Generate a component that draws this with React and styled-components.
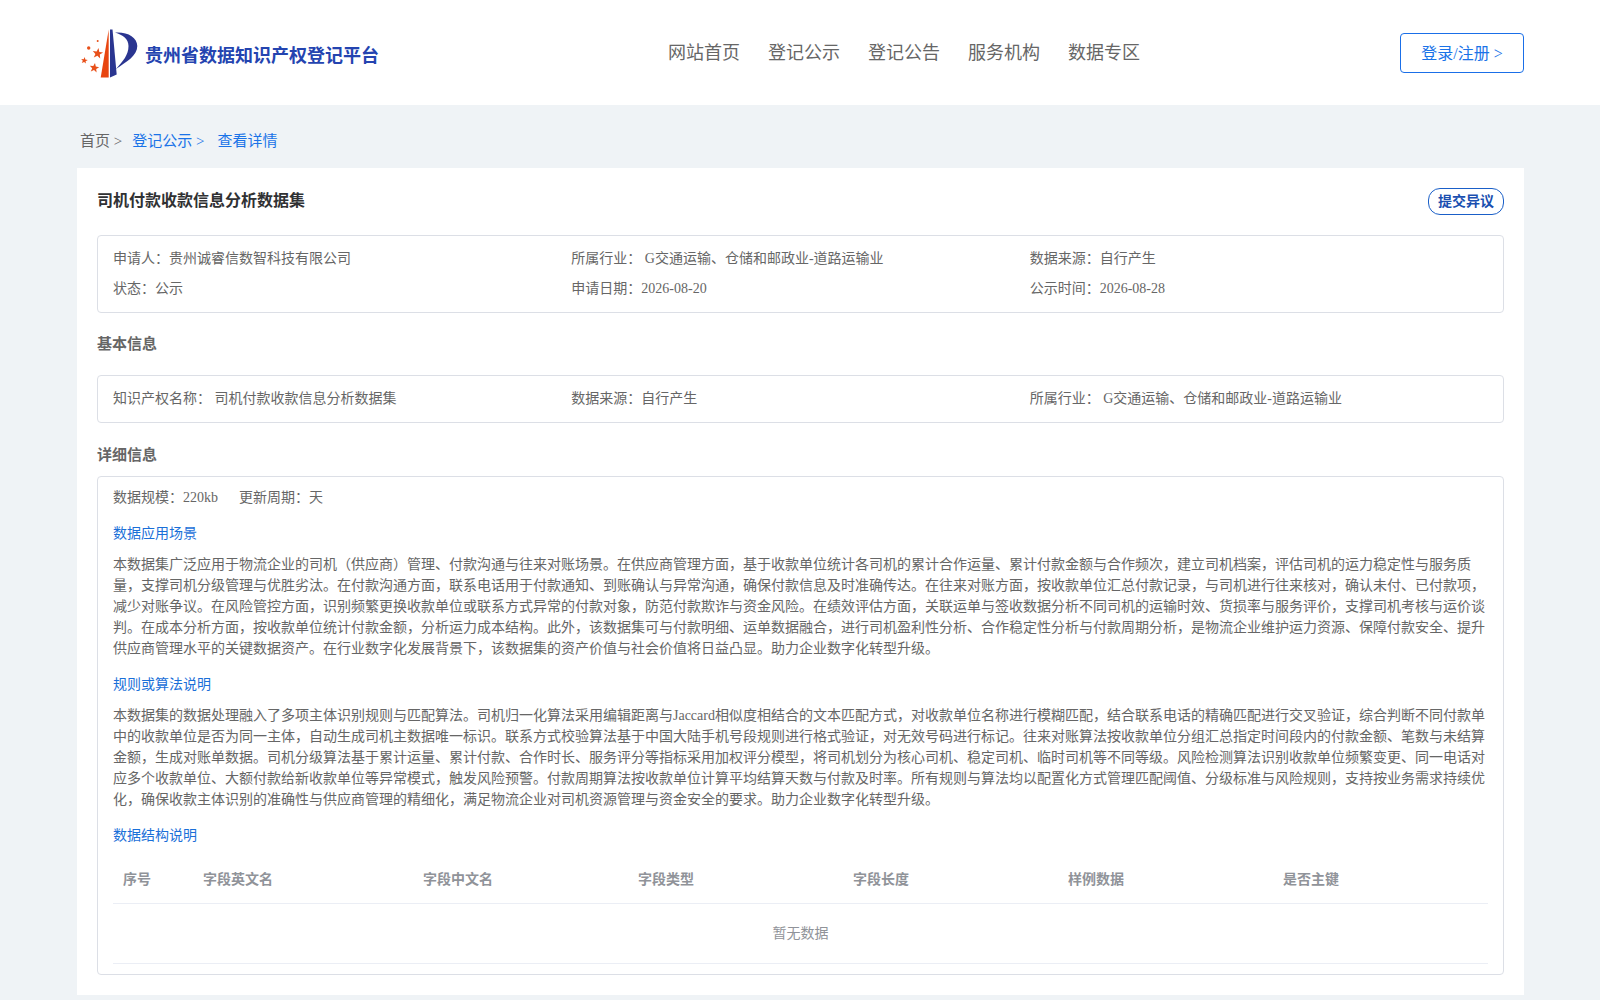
import React from "react";
import styled, { createGlobalStyle } from "styled-components";

const Global = createGlobalStyle`
  html, body { margin: 0; padding: 0; background: #eff3f6; }
  body { font-family: "Liberation Serif", "Noto Sans CJK SC", serif; color: #666; }
  * { box-sizing: border-box; }
`;
const Page = styled.div`height: 1000px; overflow: hidden; background: #eff3f6;`;
const Header = styled.header`
  height: 105px; background: #fff; display: grid;
  grid-template-columns: 588px auto 1fr; align-items: center; padding: 0 76px 0 80px;
`;
const Brand = styled.div`display: flex; align-items: center; gap: 7px;`;
const BrandName = styled.span`font-size: 18px; font-weight: 700; color: #2444b0; margin-top: 3px;`;
const Nav = styled.nav`display: flex; gap: 28px;`;
const NavItem = styled.a`font-size: 18px; line-height: 24px; color: #666;`;
const LoginWrap = styled.div`display: flex; justify-content: flex-end;`;
const Login = styled.button`
  width: 124px; height: 40px; border: 1px solid #1a6fe8; border-radius: 4px; background: #fff;
  color: #1a73e8; font: inherit; font-size: 16px; padding: 0 0 2px;
`;
const Crumbs = styled.div`
  height: 63px; padding: 6px 0 0 80px; display: flex; align-items: center; font-size: 15px;
`;
const CrumbPlain = styled.span`color: #666; margin-right: 10px;`;
const CrumbLink = styled.span`color: #1a73e8; margin-right: ${p => p.$gap || 0}px;`;
const Card = styled.main`
  margin: 0 76px 0 77px; background: #fff; padding: 20px 20px 10px; height: 827px;
`;
const TitleRow = styled.div`display: flex; justify-content: space-between; align-items: flex-start; height: 47px;`;
const Title = styled.h1`margin: 1px 0 0; font-size: 16px; line-height: 24px; font-weight: 700; color: #303133;`;
const Objection = styled.button`
  width: 76px; height: 27px; border: 1px solid #1a5fc8; border-radius: 12px; background: #fff; padding: 0 0 3px;
  color: #1a4fb0; font: inherit; font-size: 14px; font-weight: 700;
`;
const Box = styled.section`
  border: 1px solid #dcdfe6; border-radius: 4px; padding: ${p => p.$pad || "8px 15px"};
  font-size: 14px; line-height: 30px; color: #666;
`;
const Cols = styled.div`display: grid; grid-template-columns: repeat(3, 1fr);`;
const Section = styled.h2`margin: 0; font-size: 15px; font-weight: 700; color: #666; line-height: 20px; padding: ${p => p.$pad};`;
const Plain = styled.div`display: flex; gap: 21px; line-height: 21px;`;
const SubHead = styled.h3`margin: 15px 0 10px; font-size: 14px; font-weight: 400; color: #1a6fd8; line-height: 21px;`;
const Para = styled.p`margin: 0; font-size: 14px; line-height: 21px; color: #666;`;
const Table = styled.div`display: grid; grid-template-columns: 80px 220px repeat(4, 215px) 1fr; margin-top: 12px;`;
const Th = styled.div`
  font-size: 14px; font-weight: 700; color: #909399; height: 46px; line-height: 44px; padding-left: 10px;
  border-bottom: 1px solid #ebeef5;
`;
const Empty = styled.div`
  grid-column: 1 / -1; height: 60px; line-height: 60px; text-align: center; font-size: 14px; color: #909399;
  border-bottom: 1px solid #ebeef5;
`;

const star = (cx, cy, r) =>
  Array.from({ length: 10 }, (_, i) => {
    const a = -Math.PI / 2 + (i * Math.PI) / 5 + 0.15;
    const d = i % 2 ? r * 0.42 : r;
    return `${(cx + d * Math.cos(a)).toFixed(1)},${(cy + d * Math.sin(a)).toFixed(1)}`;
  }).join(" ");

const Logo = () => (
  <svg width="58" height="50" viewBox="0 0 58 50">
    <polygon points="28.7,1.5 20.7,49.5 28.7,49.5" fill="#e8450f" />
    <polygon points="30,1.5 32.5,1.5 36.7,46.5 30,49.5" fill="#2a3590" />
    <path d="M35 4.5 C47 3.5 57.3 9 57.3 18 C57.3 28 46 34 36 41 C43 33 48.5 27 48.5 18 C48.5 11 43 7 35 4.5Z" fill="#2a3590" />
    <g fill="#e8501a">
      <polygon points={star(17.7, 25.5, 5.5)} />
      <polygon points={star(4.3, 32.5, 3.5)} />
      <polygon points={star(14.3, 40, 5)} />
      <circle cx="8.7" cy="20" r="1.7" />
      <circle cx="17.7" cy="13" r="1" />
    </g>
  </svg>
);

const p1 = "本数据集广泛应用于物流企业的司机（供应商）管理、付款沟通与往来对账场景。在供应商管理方面，基于收款单位统计各司机的累计合作运量、累计付款金额与合作频次，建立司机档案，评估司机的运力稳定性与服务质量，支撑司机分级管理与优胜劣汰。在付款沟通方面，联系电话用于付款通知、到账确认与异常沟通，确保付款信息及时准确传达。在往来对账方面，按收款单位汇总付款记录，与司机进行往来核对，确认未付、已付款项，减少对账争议。在风险管控方面，识别频繁更换收款单位或联系方式异常的付款对象，防范付款欺诈与资金风险。在绩效评估方面，关联运单与签收数据分析不同司机的运输时效、货损率与服务评价，支撑司机考核与运价谈判。在成本分析方面，按收款单位统计付款金额，分析运力成本结构。此外，该数据集可与付款明细、运单数据融合，进行司机盈利性分析、合作稳定性分析与付款周期分析，是物流企业维护运力资源、保障付款安全、提升供应商管理水平的关键数据资产。在行业数字化发展背景下，该数据集的资产价值与社会价值将日益凸显。助力企业数字化转型升级。";
const p2 = "本数据集的数据处理融入了多项主体识别规则与匹配算法。司机归一化算法采用编辑距离与Jaccard相似度相结合的文本匹配方式，对收款单位名称进行模糊匹配，结合联系电话的精确匹配进行交叉验证，综合判断不同付款单中的收款单位是否为同一主体，自动生成司机主数据唯一标识。联系方式校验算法基于中国大陆手机号段规则进行格式验证，对无效号码进行标记。往来对账算法按收款单位分组汇总指定时间段内的付款金额、笔数与未结算金额，生成对账单数据。司机分级算法基于累计运量、累计付款、合作时长、服务评分等指标采用加权评分模型，将司机划分为核心司机、稳定司机、临时司机等不同等级。风险检测算法识别收款单位频繁变更、同一电话对应多个收款单位、大额付款给新收款单位等异常模式，触发风险预警。付款周期算法按收款单位计算平均结算天数与付款及时率。所有规则与算法均以配置化方式管理匹配阈值、分级标准与风险规则，支持按业务需求持续优化，确保收款主体识别的准确性与供应商管理的精细化，满足物流企业对司机资源管理与资金安全的要求。助力企业数字化转型升级。";

const nav = ["网站首页", "登记公示", "登记公告", "服务机构", "数据专区"];
const heads = ["序号", "字段英文名", "字段中文名", "字段类型", "字段长度", "样例数据", "是否主键"];

export default function App() {
  return (
    <Page>
      <Global />
      <Header>
        <Brand><Logo /><BrandName>贵州省数据知识产权登记平台</BrandName></Brand>
        <Nav>{nav.map(n => <NavItem key={n}>{n}</NavItem>)}</Nav>
        <LoginWrap><Login>登录/注册 &gt;</Login></LoginWrap>
      </Header>
      <Crumbs>
        <CrumbPlain>首页 &gt;</CrumbPlain>
        <CrumbLink $gap={13}>登记公示 &gt;</CrumbLink>
        <CrumbLink>查看详情</CrumbLink>
      </Crumbs>
      <Card>
        <TitleRow><Title>司机付款收款信息分析数据集</Title><Objection>提交异议</Objection></TitleRow>
        <Box>
          <Cols>
            <div>申请人：贵州诚睿信数智科技有限公司</div>
            <div>所属行业： G交通运输、仓储和邮政业-道路运输业</div>
            <div>数据来源：自行产生</div>
            <div>状态：公示</div>
            <div>申请日期：2026-08-20</div>
            <div>公示时间：2026-08-28</div>
          </Cols>
        </Box>
        <Section $pad="21px 0">基本信息</Section>
        <Box>
          <Cols>
            <div>知识产权名称： 司机付款收款信息分析数据集</div>
            <div>数据来源：自行产生</div>
            <div>所属行业： G交通运输、仓储和邮政业-道路运输业</div>
          </Cols>
        </Box>
        <Section $pad="22px 0 11px">详细信息</Section>
        <Box $pad="10px 15px 10px">
          <Plain><span>数据规模：220kb</span><span>更新周期：天</span></Plain>
          <SubHead>数据应用场景</SubHead>
          <Para>{p1}</Para>
          <SubHead>规则或算法说明</SubHead>
          <Para>{p2}</Para>
          <SubHead>数据结构说明</SubHead>
          <Table>
            {heads.map(h => <Th key={h}>{h}</Th>)}
            <Empty>暂无数据</Empty>
          </Table>
        </Box>
      </Card>
    </Page>
  );
}
